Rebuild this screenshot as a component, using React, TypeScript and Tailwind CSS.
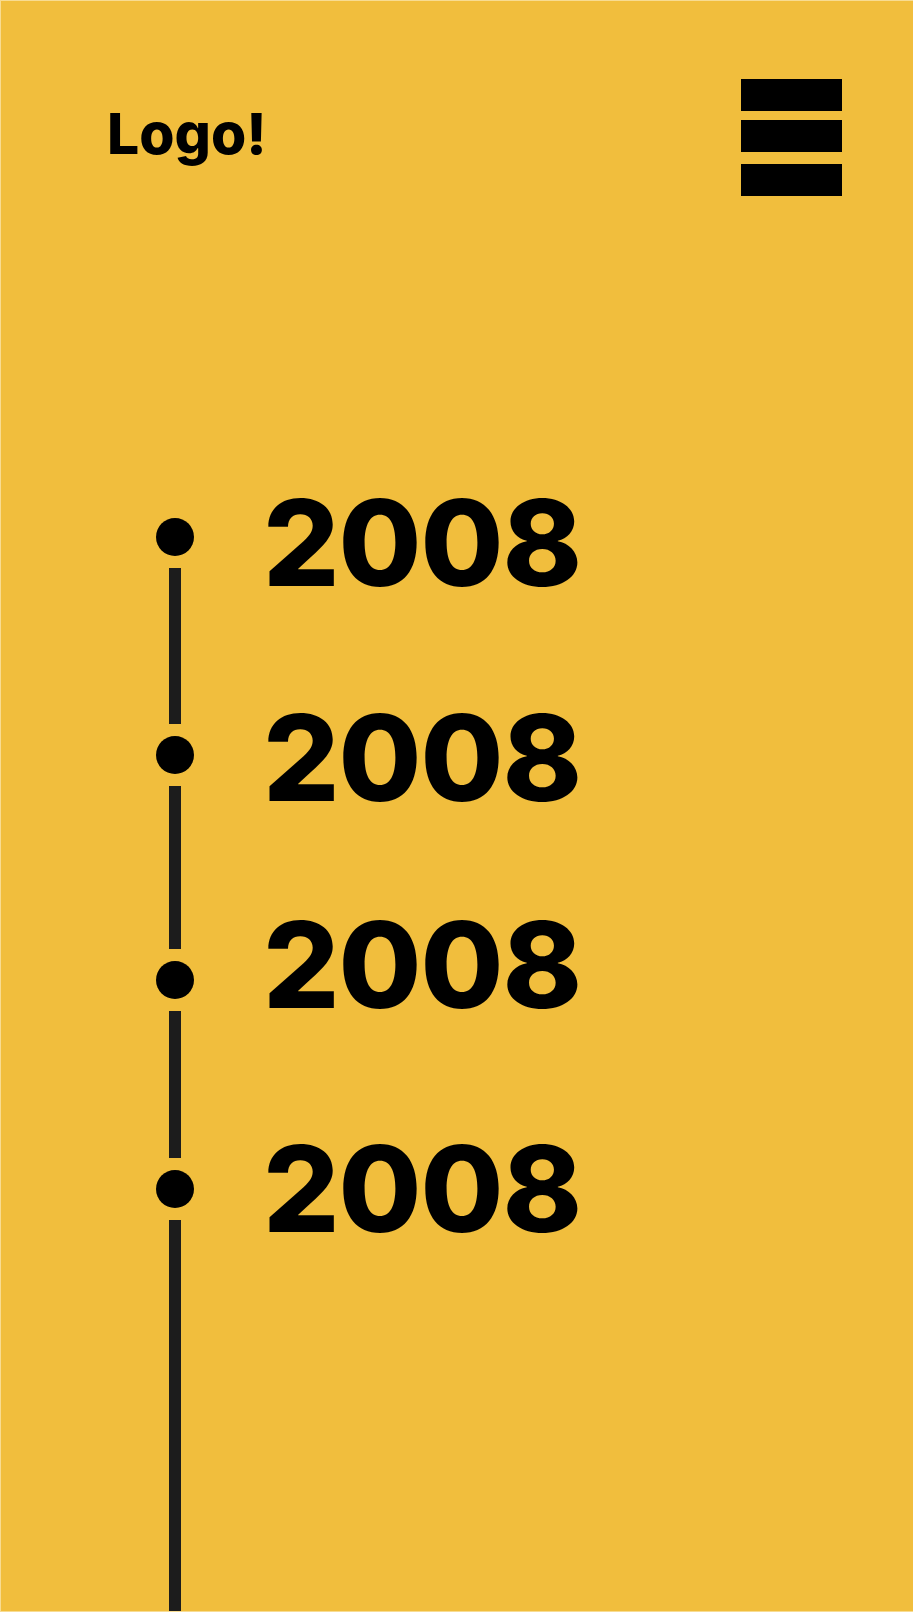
import React from "react"

const years = [
  { label: "2008", top: "mt-[287px]" },
  { label: "2008", top: "mt-[95px]" },
  { label: "2008", top: "mt-[87px]" },
  { label: "2008", top: "mt-[104px]" },
]

function Dot() {
  return <div className="h-[38px] w-[38px] shrink-0 rounded-full bg-black" />
}

function Timeline() {
  return (
    <div className="flex w-[38px] flex-col items-center gap-[12px] self-stretch pt-[322px]">
      <Dot />
      <div className="h-[156px] w-[12px] bg-[#1c1c1c]" />
      <Dot />
      <div className="h-[163px] w-[12px] bg-[#1c1c1c]" />
      <Dot />
      <div className="h-[147px] w-[12px] bg-[#1c1c1c]" />
      <Dot />
      <div className="w-[12px] flex-1 bg-[#1c1c1c]" />
    </div>
  )
}

export default function App() {
  return (
    <div className="flex h-[1612px] w-full flex-col overflow-hidden border-t border-b border-l border-[#f8dc92] bg-[#f1be3d]">
      {/* Header */}
      <header className="flex items-start justify-between pt-[78px] pl-[106px] pr-[71px]">
        <span
          className="mt-[26px] text-[57px] leading-none font-extrabold text-black"
          style={{ fontFamily: "Inter, sans-serif" }}
        >
          Logo!
        </span>

        <button className="flex w-[101px] flex-col">
          <span className="h-[32px] w-full bg-black" />
          <span className="mt-[9px] h-[32px] w-full bg-black" />
          <span className="mt-[12px] h-[32px] w-full bg-black" />
        </button>
      </header>

      {/* Timeline */}
      <main className="flex flex-1 gap-[69px] pl-[155px]">
        <Timeline />

        <div className="flex flex-col">
          {years.map((year, i) => (
            <h2
              key={i}
              className={`${year.top} text-[120px] leading-none font-extrabold tracking-[-1px] text-black`}
              style={{ fontFamily: "Inter, sans-serif" }}
            >
              {year.label}
            </h2>
          ))}
        </div>
      </main>
    </div>
  )
}
